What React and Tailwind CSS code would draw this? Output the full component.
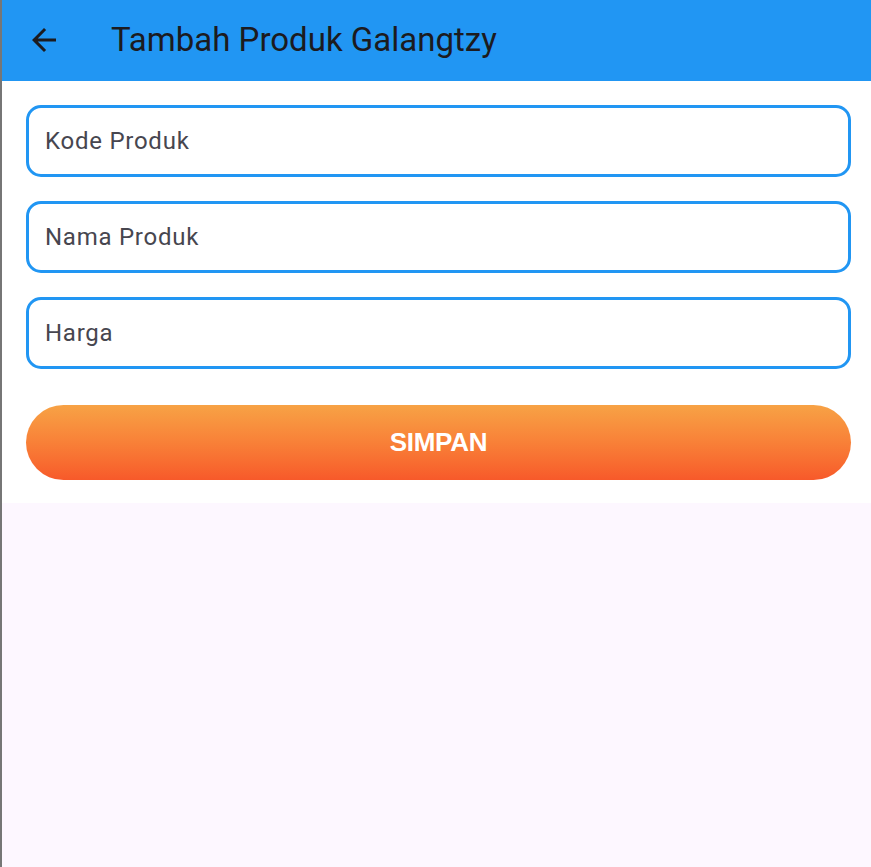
import React from "react";

const fields = ["Kode Produk", "Nama Produk", "Harga"];

const Field = ({ label }) => (
  <div className="h-[72px] flex items-center px-[16px] border-[3px] border-[#2196F3] rounded-[15px] bg-white">
    <span className="text-[24px] tracking-[0.75px] text-[#47464f]">{label}</span>
  </div>
);

export default function App() {
  return (
    <div
      className="flex min-h-screen bg-[#FDF7FF]"
      style={{ fontFamily: "Roboto, 'Noto Sans', sans-serif" }}
    >
      {/* left window edge */}
      <div className="w-[2px] shrink-0 bg-[#767676]"></div>

      <div className="flex-1 flex flex-col">
        {/* App bar */}
        <div className="h-[81px] bg-[#2196F3] flex items-center">
          <div className="w-[86px] pl-[24px] pb-[2px]">
            <svg width="36" height="36" viewBox="0 0 24 24" fill="#1c1b1f">
              <path d="M20 11H7.83l5.59-5.59L12 4l-8 8 8 8 1.41-1.41L7.83 13H20v-2z" />
            </svg>
          </div>
          <h1 className="pl-[23px] pb-[2px] text-[33px] text-[#1c1b1f] leading-none">
            Tambah Produk Galangtzy
          </h1>
        </div>

        {/* Form */}
        <div className="bg-white px-[24px] pt-[24px] pb-[23px] pr-[20px]">
          <div className="flex flex-col gap-[24px]">
            {fields.map((f) => (
              <Field key={f} label={f} />
            ))}
          </div>
          <button className="mt-[36px] w-full h-[75px] rounded-full bg-linear-to-b from-[#F7A245] to-[#F7592A] flex items-center justify-center">
            <span
              className="text-white font-bold text-[26px] tracking-[-0.3px]"
              style={{ fontFamily: "'Liberation Sans', Arial, sans-serif" }}
            >
              SIMPAN
            </span>
          </button>
        </div>
      </div>
    </div>
  );
}
